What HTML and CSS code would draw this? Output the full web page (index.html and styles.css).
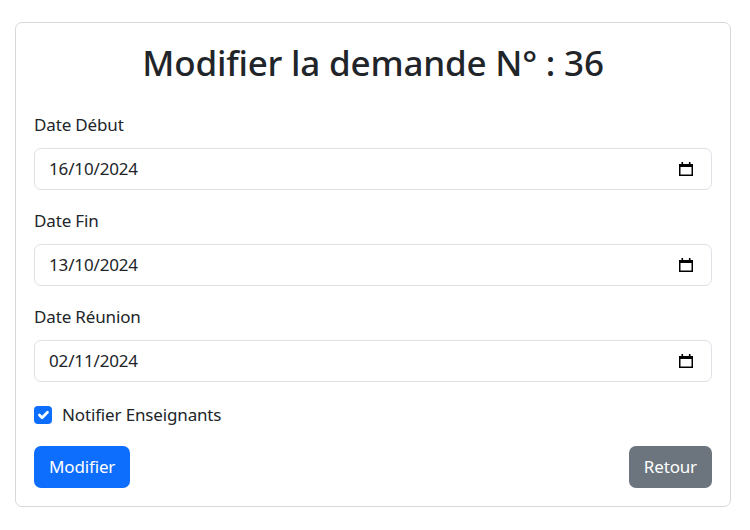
FILE: index.html
```html
<!DOCTYPE html>
<html lang="fr">
<head>
<meta charset="utf-8">
<title>Modifier la demande</title>
<link rel="stylesheet" href="styles.css">
</head>
<body>
<div class="card">
  <h1 class="title">Modifier la demande N° : 36</h1>
  <div class="group">
    <label class="label">Date Début</label>
    <div class="field"><span>16/10/2024</span>
      <svg class="cal" viewBox="0 0 14 14" width="14" height="14"><rect x="0.75" y="2.75" width="12.5" height="10.5" fill="none" stroke="#000" stroke-width="1.5"/><rect x="0" y="2" width="14" height="3" fill="#000"/><rect x="2.5" y="0" width="1.6" height="3" fill="#000"/><rect x="9.9" y="0" width="1.6" height="3" fill="#000"/></svg>
    </div>
  </div>
  <div class="group">
    <label class="label">Date Fin</label>
    <div class="field"><span>13/10/2024</span>
      <svg class="cal" viewBox="0 0 14 14" width="14" height="14"><rect x="0.75" y="2.75" width="12.5" height="10.5" fill="none" stroke="#000" stroke-width="1.5"/><rect x="0" y="2" width="14" height="3" fill="#000"/><rect x="2.5" y="0" width="1.6" height="3" fill="#000"/><rect x="9.9" y="0" width="1.6" height="3" fill="#000"/></svg>
    </div>
  </div>
  <div class="group">
    <label class="label">Date Réunion</label>
    <div class="field"><span>02/11/2024</span>
      <svg class="cal" viewBox="0 0 14 14" width="14" height="14"><rect x="0.75" y="2.75" width="12.5" height="10.5" fill="none" stroke="#000" stroke-width="1.5"/><rect x="0" y="2" width="14" height="3" fill="#000"/><rect x="2.5" y="0" width="1.6" height="3" fill="#000"/><rect x="9.9" y="0" width="1.6" height="3" fill="#000"/></svg>
    </div>
  </div>
  <div class="check">
    <span class="box"><svg viewBox="0 0 20 20" width="18" height="18"><path d="M6 10l3 3l6-6" fill="none" stroke="#fff" stroke-width="3" stroke-linecap="round" stroke-linejoin="round"/></svg></span>
    <span>Notifier Enseignants</span>
  </div>
  <div class="actions">
    <button class="btn btn-primary">Modifier</button>
    <button class="btn btn-secondary">Retour</button>
  </div>
</div>
</body>
</html>
```
FILE: styles.css
```css
* { box-sizing: border-box; }
body {
  margin: 0;
  font-family: "Noto Sans", "Open Sans", sans-serif;
  font-size: 17px;
  letter-spacing: -0.15px;
  line-height: 26px;
  color: #212529;
  background: #fff;
}
.card {
  margin: 22px 19px 0 15px;
  border: 1px solid #d6d8db;
  border-radius: 7px;
  padding: 18px;
  display: flex;
  flex-direction: column;
}
.title {
  margin: 0 0 27px;
  font-size: 35px;
  letter-spacing: -0.2px;
  line-height: 44px;
  font-weight: 500;
  text-align: center;
}
.group {
  display: flex;
  flex-direction: column;
  margin-bottom: 18px;
}
.label {
  margin-bottom: 10px;
}
.field {
  display: flex;
  align-items: center;
  justify-content: space-between;
  height: 42px;
  padding: 7px 18px 7px 14px;
  border: 1px solid #dee2e6;
  border-radius: 7px;
}
.cal { display: block; }
.check {
  display: flex;
  align-items: center;
  gap: 10px;
  margin: 2px 0 18px;
}
.box {
  width: 18px;
  height: 18px;
  border-radius: 4px;
  background: #0d6efd;
  display: flex;
}
.actions {
  display: flex;
  justify-content: space-between;
}
.btn {
  font: inherit;
  letter-spacing: inherit;
  height: 42px;
  padding: 7px 15px;
  border: none;
  border-radius: 7px;
  color: #fff;
}
.btn-primary { background: #0d6efd; }
.btn-secondary { background: #6c757d; }
```
